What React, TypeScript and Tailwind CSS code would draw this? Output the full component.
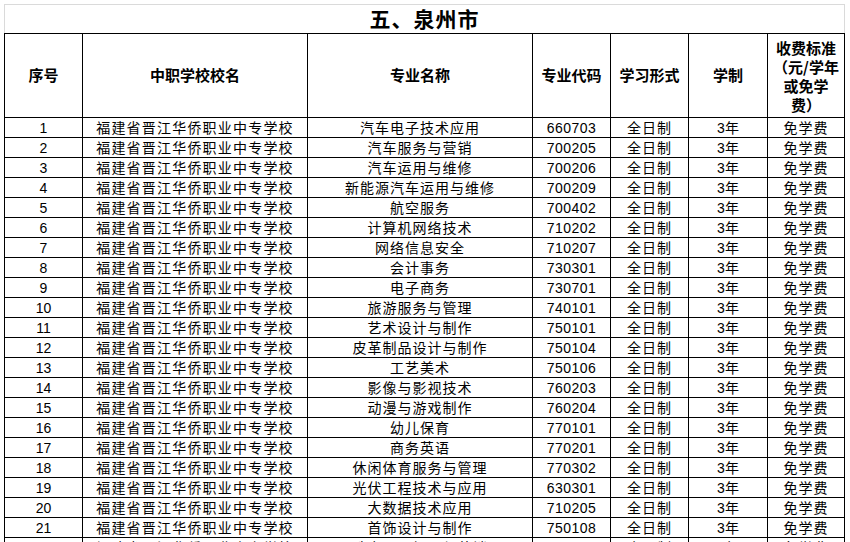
const rows: [string, string][] = [
  ['汽车电子技术应用', '660703'],
  ['汽车服务与营销', '700205'],
  ['汽车运用与维修', '700206'],
  ['新能源汽车运用与维修', '700209'],
  ['航空服务', '700402'],
  ['计算机网络技术', '710202'],
  ['网络信息安全', '710207'],
  ['会计事务', '730301'],
  ['电子商务', '730701'],
  ['旅游服务与管理', '740101'],
  ['艺术设计与制作', '750101'],
  ['皮革制品设计与制作', '750104'],
  ['工艺美术', '750106'],
  ['影像与影视技术', '760203'],
  ['动漫与游戏制作', '760204'],
  ['幼儿保育', '770101'],
  ['商务英语', '770201'],
  ['休闲体育服务与管理', '770302'],
  ['光伏工程技术与应用', '630301'],
  ['大数据技术应用', '710205'],
  ['首饰设计与制作', '750108'],
  ['珠宝玉石加工与营销', '750109'],
];

const widths = ['w-[78px]', 'w-[225px]', 'w-[225px]', 'w-[78px]', 'w-[78px]', 'w-[79px]', 'w-[77px]'];

function Cell({ w, children, className = '' }: { w: string; children: React.ReactNode; className?: string }) {
  return (
    <div className={`${w} shrink-0 border-r border-black flex items-center justify-center text-center ${className}`}>
      {children}
    </div>
  );
}

export default function App() {
  const headers = ['序号', '中职学校校名', '专业名称', '专业代码', '学习形式', '学制'];
  return (
    <div className="w-[850px] h-[542px] overflow-hidden bg-white pl-[4px] pt-[4px] font-['Liberation_Sans','Noto_Sans_CJK_SC',sans-serif] text-black">
      <div className="w-[841px] h-[29px] border-t border-l border-r border-[#dadada] flex items-center justify-center box-border">
        <span className="text-[21px] font-bold tracking-[1px] font-['Noto_Sans_CJK_SC',serif]">五、泉州市</span>
      </div>
      <div className="w-[841px] border-t border-l border-black">
        <div className="flex h-[84px] border-b border-black font-bold text-[15px] font-['Noto_Sans_CJK_SC',sans-serif]">
          {headers.map((h, i) => (
            <Cell key={h} w={widths[i]}>{h}</Cell>
          ))}
          <Cell w={widths[6]} className="leading-[19px] flex-col">
            <span>收费标准</span>
            <span>（元/学年</span>
            <span>或免学</span>
            <span>费）</span>
          </Cell>
        </div>
        {rows.map(([name, code], i) => (
          <div key={code} className="flex h-[20px] border-b border-black text-[14px] leading-[20px]">
            <Cell w={widths[0]}>{i + 1}</Cell>
            <Cell w={widths[1]} className="tracking-[1.2px]">福建省晋江华侨职业中专学校</Cell>
            <Cell w={widths[2]} className="tracking-[1px]">{name}</Cell>
            <Cell w={widths[3]} className="tracking-[0.5px]">{code}</Cell>
            <Cell w={widths[4]} className="tracking-[1px]">全日制</Cell>
            <Cell w={widths[5]}>3年</Cell>
            <Cell w={widths[6]} className="tracking-[1px]">免学费</Cell>
          </div>
        ))}
      </div>
    </div>
  );
}
